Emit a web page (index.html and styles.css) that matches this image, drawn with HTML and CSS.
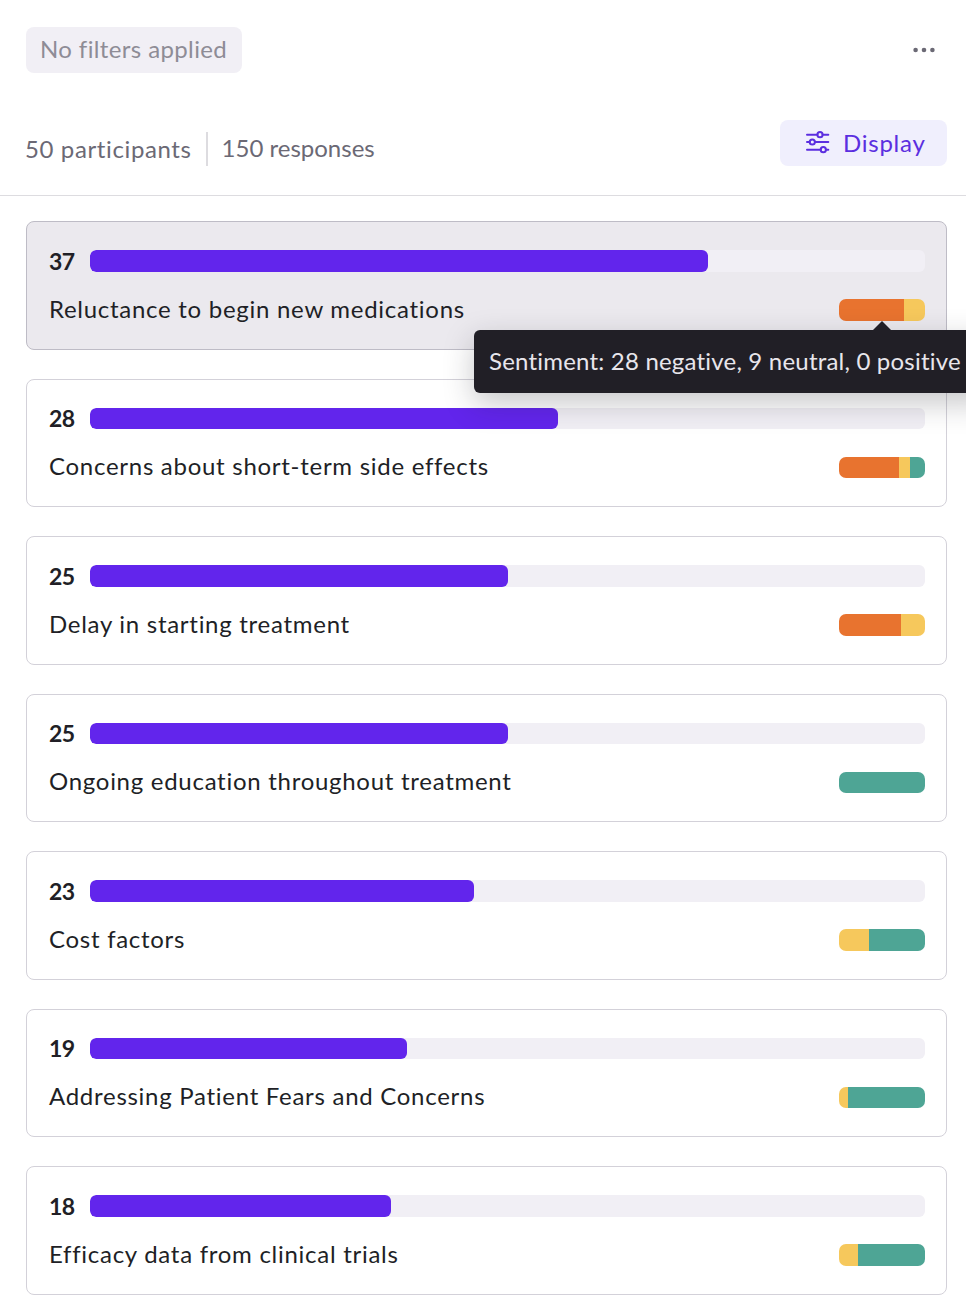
FILE: index.html
```html
<!DOCTYPE html>
<html lang="en">
<head>
<meta charset="utf-8">
<title>Themes</title>
<link rel="stylesheet" href="styles.css">
</head>
<body>
<header class="top">
  <div class="filter-row">
    <span class="filter-chip">No filters applied</span>
    <button class="more" aria-label="More"><svg width="22" height="6" viewBox="0 0 22 6"><circle cx="2.6" cy="3" r="2.3"/><circle cx="11" cy="3" r="2.3"/><circle cx="19.4" cy="3" r="2.3"/></svg></button>
  </div>
  <div class="stats-row">
    <div class="stats"><span class="stat">50 participants</span><span class="stat stat-second">150 responses</span></div>
    <button class="display"><svg width="24" height="24" viewBox="0 0 24 24" fill="none" stroke="currentColor" stroke-width="2" stroke-linecap="round"><path d="M1 4.7h10.4M16.6 4.7h5.7M1 12h2.7M8.9 12h13.4M1 19.7h13.7M19.9 19.7h2.4"/><circle cx="14" cy="4.7" r="2.6"/><circle cx="6.3" cy="12" r="2.6"/><circle cx="17.3" cy="19.7" r="2.6"/></svg><span>Display</span></button>
  </div>
</header>
<main class="list">
  <article class="card card-active">
    <div class="row"><b class="count">37</b><div class="track"><div class="fill" style="width:74%"></div></div></div>
    <div class="row row-label"><span class="label">Reluctance to begin new medications</span><div class="senti"><i class="neg" style="width:65px"></i><i class="neu" style="width:21px"></i></div></div>
    <div class="tooltip"><span class="tip-arrow"></span>Sentiment: 28 negative, 9 neutral, 0 positive</div>
  </article>
  <article class="card">
    <div class="row"><b class="count">28</b><div class="track"><div class="fill" style="width:56%"></div></div></div>
    <div class="row row-label"><span class="label">Concerns about short-term side effects</span><div class="senti"><i class="neg" style="width:60px"></i><i class="neu" style="width:11px"></i><i class="pos" style="width:15px"></i></div></div>
  </article>
  <article class="card">
    <div class="row"><b class="count">25</b><div class="track"><div class="fill" style="width:50%"></div></div></div>
    <div class="row row-label"><span class="label">Delay in starting treatment</span><div class="senti"><i class="neg" style="width:62px"></i><i class="neu" style="width:24px"></i></div></div>
  </article>
  <article class="card">
    <div class="row"><b class="count">25</b><div class="track"><div class="fill" style="width:50%"></div></div></div>
    <div class="row row-label"><span class="label">Ongoing education throughout treatment</span><div class="senti"><i class="pos" style="width:86px"></i></div></div>
  </article>
  <article class="card">
    <div class="row"><b class="count">23</b><div class="track"><div class="fill" style="width:46%"></div></div></div>
    <div class="row row-label"><span class="label">Cost factors</span><div class="senti"><i class="neu" style="width:30px"></i><i class="pos" style="width:56px"></i></div></div>
  </article>
  <article class="card">
    <div class="row"><b class="count">19</b><div class="track"><div class="fill" style="width:38%"></div></div></div>
    <div class="row row-label"><span class="label">Addressing Patient Fears and Concerns</span><div class="senti"><i class="neu" style="width:9px"></i><i class="pos" style="width:77px"></i></div></div>
  </article>
  <article class="card">
    <div class="row"><b class="count">18</b><div class="track"><div class="fill" style="width:36%"></div></div></div>
    <div class="row row-label"><span class="label">Efficacy data from clinical trials</span><div class="senti"><i class="neu" style="width:19px"></i><i class="pos" style="width:67px"></i></div></div>
  </article>
</main>
</body>
</html>
```
FILE: styles.css
```css
* { box-sizing: border-box; }
html, body { margin: 0; padding: 0; background: #fff; }
body {
  width: 966px;
  height: 1300px;
  overflow: hidden;
  font-family: "Lato", "Noto Sans", sans-serif;
  color: #211f26;
}
.top {
  height: 196px;
  padding: 27px 19px 0 26px;
  border-bottom: 1px solid #dddce0;
}
.filter-row { display: flex; justify-content: space-between; align-items: center; height: 46px; }
.filter-chip {
  display: flex; align-items: center;
  height: 46px; width: 216px;
  padding: 0 0 3px 14px;
  background: #f1eff5;
  border-radius: 8px;
  color: #8e8c96;
  font-size: 24px;
  letter-spacing: 0.38px;
}
.more { display: flex; border: 0; background: none; padding: 0; margin-right: 12px; fill: #6b6975; }
.stats-row { display: flex; justify-content: space-between; align-items: center; margin-top: 47px; height: 46px; }
.stats { display: flex; align-items: center; font-size: 24px; color: #6b6975; margin-top: 12px; }
.stat { letter-spacing: 0.62px; margin-left: -1px; padding-bottom: 2px; }
.stat-second { margin-left: 14px; padding: 0 0 0 14px; border-left: 2px solid #dddce0; height: 34px; line-height: 32px; letter-spacing: 0; }
.display {
  display: flex; align-items: center; gap: 13px;
  width: 167px; height: 46px;
  padding: 0 0 2px 26px;
  border: 0; border-radius: 8px;
  background: #f0effd;
  color: #5b2ee0;
  font: inherit; font-size: 24px; letter-spacing: 0.75px;
}
.list { display: flex; flex-direction: column; gap: 29px; padding: 25px 19px 0 26px; }
.card {
  position: relative;
  height: 128.5px;
  flex: none;
  padding: 28px 21px 0 22px;
  background: #fff;
  border: 1px solid #d3d1d9;
  border-radius: 8px;
}
.card-active { background: #ebe9ee; border-color: #bebcc6; }
.row { display: flex; align-items: center; height: 21.5px; }
.row-label { justify-content: space-between; margin-top: 27.5px; }
.count { width: 41px; flex: none; font-size: 23px; font-weight: 700; letter-spacing: -0.6px; }
.track { flex: 1; height: 21.5px; border-radius: 6px; background: #f1eff5; overflow: hidden; }
.fill { height: 100%; background: #6225ec; border-radius: 6px; }
.label { font-size: 24px; letter-spacing: 0.72px; color: #211f26; margin-bottom: 3px; }
.senti { display: flex; width: 86px; height: 21.5px; border-radius: 7px; overflow: hidden; }
.senti i { display: block; height: 100%; }
.neg { background: #e8732f; }
.neu { background: #f6c85c; }
.pos { background: #4ea595; }
.tooltip {
  position: absolute;
  z-index: 5;
  left: 447px; top: 108px;
  width: 520px; height: 63px;
  padding: 0 0 2px 15px;
  display: flex; align-items: center;
  white-space: nowrap;
  background: #211f26;
  color: #e8e6ec;
  border-radius: 6px;
  font-size: 24px;
  letter-spacing: 0.2px;
  box-shadow: 0 10px 30px rgba(33, 31, 38, 0.25);
}
.tip-arrow {
  position: absolute;
  left: 399px; top: -9px;
  width: 0; height: 0;
  border-left: 9px solid transparent;
  border-right: 9px solid transparent;
  border-bottom: 9px solid #211f26;
}
```
